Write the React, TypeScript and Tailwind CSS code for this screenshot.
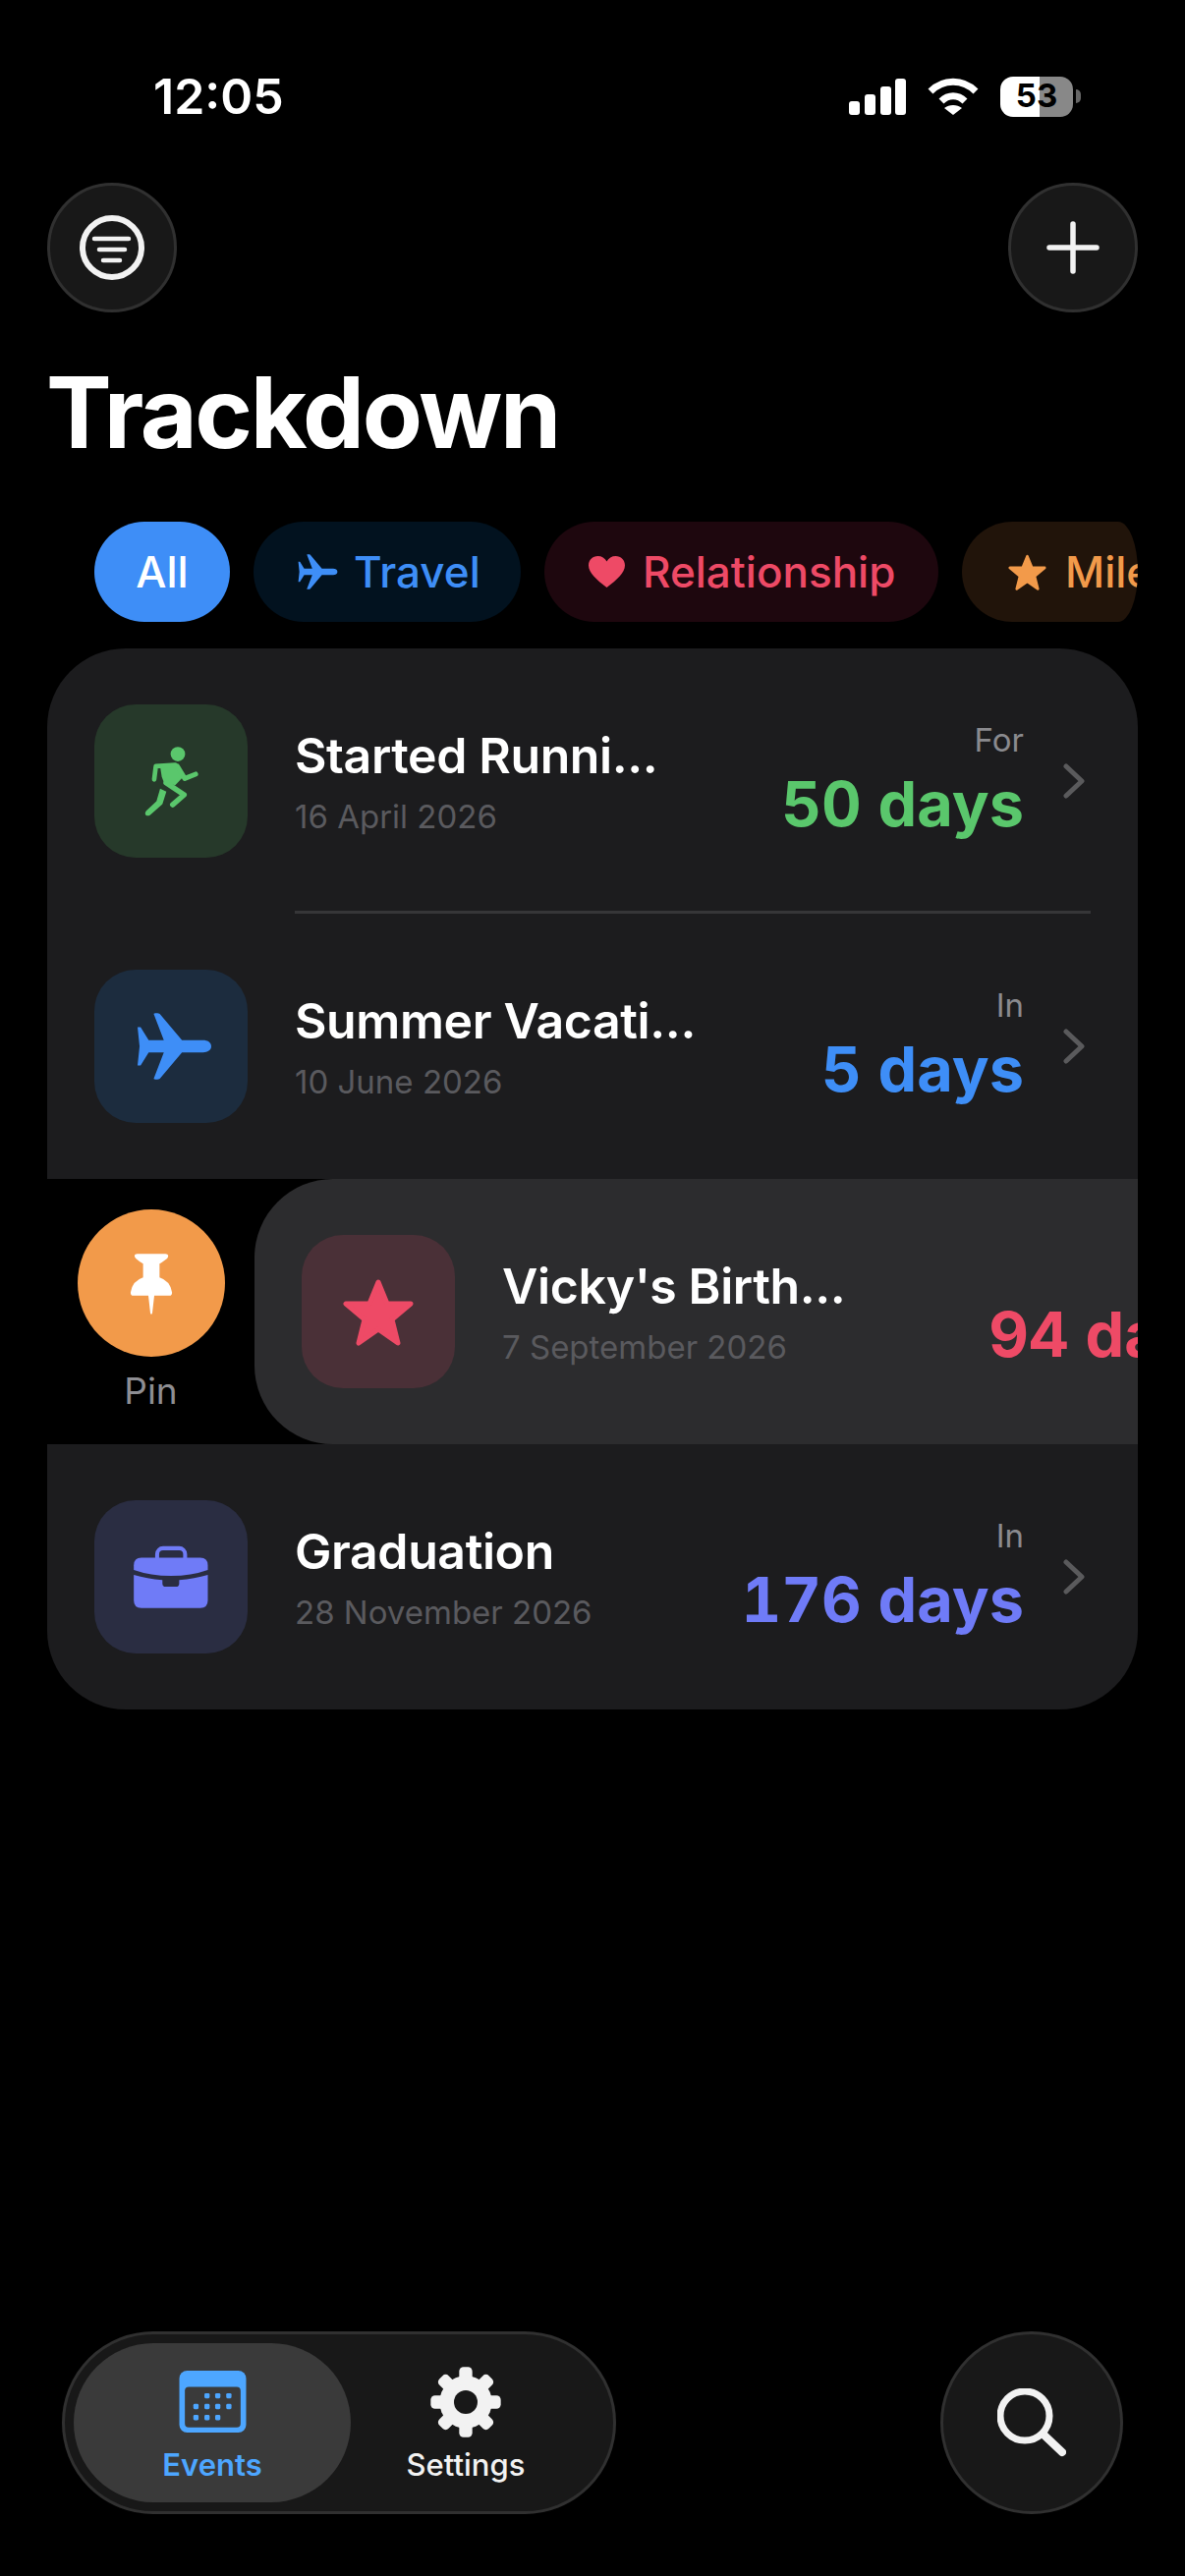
import type { ReactNode } from 'react';

function PlaneIcon({ className }: { className: string }) {
  return (
    <svg viewBox="0 0 73 66" className={className} fill="currentColor">
      <path d="M73 33c0-4-4-6-8-6H44L22 1c-1-1-6-1-6 0l10 26H11L3 14H0l2 19-2 19h3l8-13h15L16 65c0 1 5 1 6 0l22-26h21c4 0 8-2 8-6z" />
    </svg>
  );
}

function StarIcon({ className }: { className: string }) {
  return (
    <svg viewBox="0 0 72 69" className={className} fill="currentColor" stroke="currentColor" strokeWidth="5" strokeLinejoin="round">
      <path d="M36 4l9 22h24L50 42l6 24-20-14-20 14 6-24L3 26h24z" />
    </svg>
  );
}

function HeartIcon({ className }: { className: string }) {
  return (
    <svg viewBox="0 0 37 32" className={className} fill="currentColor">
      <path d="M18.5 32C8 24 0 17 0 9.500 0 4 4 0 9.500 0c3.800 0 7.200 2 9 5.500C20.300 2 23.700 0 27.500 0 33 0 37 4 37 9.500 37 17 29 24 18.500 32z" />
    </svg>
  );
}

function RunnerIcon() {
  return (
    <svg viewBox="50 50 466 466" className="h-[156px] w-[156px] text-[#5ac76c]">
      <circle cx="304" cy="201" r="22" fill="currentColor" />
      <path d="M250 238l48-6 24 36-26 28-34-8-7-18z" fill="currentColor" />
      <g fill="none" stroke="currentColor" strokeLinecap="round" strokeLinejoin="round">
        <path d="M232 278l5-40 59-4" strokeWidth="14" />
        <path d="M302 238l23 37 33-13" strokeWidth="15" />
        <path d="M268 288l55 37-35 30" strokeWidth="16" />
      </g>
      <path d="M250 306l19 9-12 38-37 33c-12 8-20-4-12-13l31-29z" fill="currentColor" />
    </svg>
  );
}

function BriefcaseIcon() {
  return (
    <svg viewBox="50 50 466 466" className="h-[156px] w-[156px] text-[#6f7bf7]">
      <rect x="241" y="196" width="85" height="50" rx="18" fill="none" stroke="currentColor" strokeWidth="12" />
      <path d="M170 262v-14q0-23 23-23h179q23 0 23 23v14q-50 18-112 18t-113-18z" fill="currentColor" />
      <path d="M170 277q40 12 87 16v10q0 10 10 10h31q10 0 10-10v-10q47-4 87-16v78q0 23-23 23H193q-23 0-23-23z" fill="currentColor" />
    </svg>
  );
}

function PinIcon() {
  return (
    <svg viewBox="55 33 448 448" className="h-[150px] w-[150px] text-white">
      <path
        fill="currentColor"
        d="M236 168H322Q336 170 327 182Q312 194 304 198V240Q336 250 342 285Q342 295 334 295H288L282 348Q279 355 276 348L270 295H224Q216 295 216 285Q222 250 254 240V198Q246 194 232 182Q222 170 236 168Z"
      />
    </svg>
  );
}

function Chevron() {
  return (
    <svg viewBox="0 0 22 36" className="ml-[40px] h-[36px] w-[22px] shrink-0" fill="none" stroke="#5a5a5c" strokeWidth="5" strokeLinecap="round" strokeLinejoin="round">
      <path d="M3 3l16 15L3 33" />
    </svg>
  );
}

function CalendarIcon() {
  return (
    <svg viewBox="0 0 205 190" className="h-[63px] w-[69px]">
      <rect width="205" height="190" rx="24" fill="#4da6ff" />
      <rect x="17" y="50" width="171" height="124" rx="12" fill="#3a3a3a" />
      <g fill="#4da6ff">
        {[[85, 77], [118, 77], [152, 77], [51, 110], [85, 110], [118, 110], [152, 110], [51, 144], [85, 144], [118, 144]].map(([x, y]) => (
          <rect key={`${x}-${y}`} x={x - 8} y={y - 8} width="16" height="16" rx="4" />
        ))}
      </g>
    </svg>
  );
}

function GearIcon() {
  return (
    <svg viewBox="0 0 216 216" className="h-[72px] w-[72px]">
      <g fill="#f2f2f2">
        <circle cx="108" cy="108" r="80" />
        {[0, 45, 90, 135, 180, 225, 270, 315].map((deg) => (
          <rect key={deg} x="88" y="1" width="40" height="60" rx="13" transform={`rotate(${deg} 108 108)`} />
        ))}
      </g>
      <circle cx="108" cy="108" r="36" fill="#181818" />
    </svg>
  );
}

function StatusIcons() {
  return (
    <div className="flex items-center">
      <svg viewBox="0 0 58 37" className="h-[37px] w-[58px]" fill="#fff">
        <rect x="0" y="23" width="11" height="14" rx="3" />
        <rect x="16" y="16" width="11" height="21" rx="3" />
        <rect x="32" y="8" width="11" height="29" rx="3" />
        <rect x="47" y="0" width="11" height="37" rx="3" />
      </svg>
      <svg viewBox="0 0 52 38" className="ml-[22px] h-[38px] w-[52px]">
        <path d="M3 14C16 1 36 1 49 14" fill="none" stroke="#fff" strokeWidth="7" />
        <path d="M14 24c7-7 17-7 24 0" fill="none" stroke="#fff" strokeWidth="7" />
        <path d="M26 38L17 31c5-4 13-4 18 0z" fill="#fff" />
      </svg>
      <div className="ml-[22px] flex h-[41px] w-[74px] items-center justify-center rounded-[13px] bg-[linear-gradient(90deg,#fff_54%,#888_54%)] text-[33px] font-bold text-black">
        53
      </div>
      <div className="ml-[3px] h-[14px] w-[5px] rounded-r-full bg-[#666]" />
    </div>
  );
}

function RoundButton({ children }: { children: ReactNode }) {
  return (
    <div className="flex h-[132px] w-[132px] items-center justify-center rounded-full border-[3px] border-[#303030] bg-[#181818]">
      {children}
    </div>
  );
}

function Chip({ label, icon, className }: { label: string; icon?: ReactNode; className: string }) {
  return (
    <div className={`flex h-[102px] shrink-0 items-center rounded-full text-[44px] font-medium ${className}`}>
      {icon}
      <span>{label}</span>
    </div>
  );
}

interface EventData {
  title: string;
  date: string;
  prefix: string;
  days: string;
  color: string;
  tile: string;
  icon: ReactNode;
}

function EventContent({ event }: { event: EventData }) {
  return (
    <>
      <div className={`flex h-[156px] w-[156px] shrink-0 items-center justify-center rounded-[42px] ${event.tile}`}>
        {event.icon}
      </div>
      <div className="ml-[48px] min-w-0 flex-1 pt-[2px]">
        <div className="whitespace-nowrap text-[50px] leading-[60px] font-semibold tracking-[-0.400px] text-white">{event.title}</div>
        <div className="mt-[10px] whitespace-nowrap text-[33px] leading-[44px] text-[#5a5a5e]">{event.date}</div>
      </div>
      <div className="flex shrink-0 flex-col items-end">
        <div className="text-[33px] leading-[40px] text-[#8a8a8e]">{event.prefix}</div>
        <div className={`mt-[5px] whitespace-nowrap text-[63px] leading-[80px] font-bold tabular-nums ${event.color}`}>{event.days}</div>
      </div>
      <Chevron />
    </>
  );
}

const running: EventData = {
  title: 'Started Runni...',
  date: '16 April 2026',
  prefix: 'For',
  days: '50 days',
  color: 'text-[#5ac76c]',
  tile: 'bg-[#26392a]',
  icon: <RunnerIcon />,
};

const vacation: EventData = {
  title: 'Summer Vacati...',
  date: '10 June 2026',
  prefix: 'In',
  days: '5 days',
  color: 'text-[#3e8ef7]',
  tile: 'bg-[#1c2c3e]',
  icon: <PlaneIcon className="ml-[6px] h-[68px] w-[75px] text-[#3e8ef7]" />,
};

const birthday: EventData = {
  title: "Vicky's Birth...",
  date: '7 September 2026',
  prefix: 'In',
  days: '94 days',
  color: 'text-[#ee4a66]',
  tile: 'bg-[#4a3037]',
  icon: <StarIcon className="h-[69px] w-[72px] text-[#ee4a66]" />,
};

const graduation: EventData = {
  title: 'Graduation',
  date: '28 November 2026',
  prefix: 'In',
  days: '176 days',
  color: 'text-[#6f7bf7]',
  tile: 'bg-[#2a2d42]',
  icon: <BriefcaseIcon />,
};

function EventRow({ event }: { event: EventData }) {
  return (
    <div className="flex h-[270px] items-center pr-[54px] pl-[48px]">
      <EventContent event={event} />
    </div>
  );
}

export default function App() {
  return (
    <div className="flex h-[2622px] w-[1206px] flex-col overflow-hidden bg-black font-['Inter',sans-serif] text-white">
      {/* Status bar */}
      <div className="mt-[72px] flex h-[52px] items-center justify-between pr-[106px] pl-[156px]">
        <span className="text-[50px] leading-[52px] font-semibold">12:05</span>
        <StatusIcons />
      </div>

      {/* Top buttons */}
      <div className="mt-[62px] flex justify-between px-[48px]">
        <RoundButton>
          <svg viewBox="0 0 66 66" className="h-[66px] w-[66px]" fill="none" stroke="#f2f2f2" strokeLinecap="round">
            <circle cx="33" cy="33" r="30" strokeWidth="6" />
            <path d="M15 24h35M20 35h26M24 46h17" strokeWidth="4.500" />
          </svg>
        </RoundButton>
        <RoundButton>
          <svg viewBox="0 0 54 54" className="h-[54px] w-[54px]" fill="none" stroke="#f2f2f2" strokeWidth="5.500" strokeLinecap="round">
            <path d="M27 3v48M3 27h48" />
          </svg>
        </RoundButton>
      </div>

      <h1 className="mt-[47px] pl-[47px] text-[100px] leading-[110px] font-bold tracking-[-2.400px]">Trackdown</h1>

      {/* Category chips */}
      <div className="mx-[48px] mt-[56px] flex gap-[24px] overflow-hidden rounded-[20px/51px] pl-[48px]">
        <Chip label="All" className="w-[138px] justify-center bg-[#3e8ef7] text-white" />
        <Chip label="Travel" className="w-[272px] gap-[16px] bg-[#02121f] pl-[45px] text-[#3e8ef7]" icon={<PlaneIcon className="h-[36px] w-[41px]" />} />
        <Chip label="Relationship" className="w-[401px] gap-[18px] bg-[#1e070e] pl-[45px] text-[#ee4a66]" icon={<HeartIcon className="h-[32px] w-[37px]" />} />
        <Chip label="Milestones" className="gap-[18px] bg-[#21140a] px-[46px] text-[#f29a4a]" icon={<StarIcon className="h-[37px] w-[41px]" />} />
      </div>

      {/* Event list */}
      <div className="mx-[48px] mt-[27px] overflow-hidden rounded-[80px] bg-[#1c1c1e]">
        <EventRow event={running} />
        <div className="-mt-[3px] mr-[48px] ml-[252px] h-[3px] bg-[#363638]" />
        <EventRow event={vacation} />
        <div className="flex h-[270px] overflow-hidden bg-black">
          <div className="flex w-[211px] shrink-0 flex-col items-center pt-[31px]">
            <div className="h-[150px] w-[150px] rounded-full bg-[#f29a4a]">
              <PinIcon />
            </div>
            <span className="mt-[13px] text-[37px] leading-[44px] text-[#8e8e93]">Pin</span>
          </div>
          <div className="flex h-[270px] w-[1110px] shrink-0 items-center rounded-l-[80px] bg-[#2c2c2e] pr-[54px] pl-[48px]">
            <EventContent event={birthday} />
          </div>
        </div>
        <EventRow event={graduation} />
      </div>

      {/* Tab bar */}
      <div className="mt-auto mb-[63px] flex items-center justify-between px-[63px]">
        <div className="flex h-[186px] w-[564px] items-center rounded-full border-[3px] border-[#303030] bg-[#181818] pl-[9px]">
          <div className="flex h-[162px] w-[282px] flex-col items-center rounded-full bg-[#3a3a3a] pt-[28px]">
            <CalendarIcon />
            <span className="mt-[14px] text-[31px] leading-[38px] font-semibold text-[#4da6ff]">Events</span>
          </div>
          <div className="flex h-[162px] w-[234px] flex-col items-center pt-[24px]">
            <GearIcon />
            <span className="mt-[9px] text-[31px] leading-[38px] font-medium text-[#f2f2f2]">Settings</span>
          </div>
        </div>
        <div className="flex h-[186px] w-[186px] items-center justify-center rounded-full border-[3px] border-[#303030] bg-[#181818]">
          <svg viewBox="0 0 70 70" className="h-[70px] w-[70px]" fill="none" stroke="#f2f2f2" strokeLinecap="round">
            <circle cx="28" cy="28" r="25" strokeWidth="7" />
            <path d="M47 47l19 18" strokeWidth="8" />
          </svg>
        </div>
      </div>
    </div>
  );
}
